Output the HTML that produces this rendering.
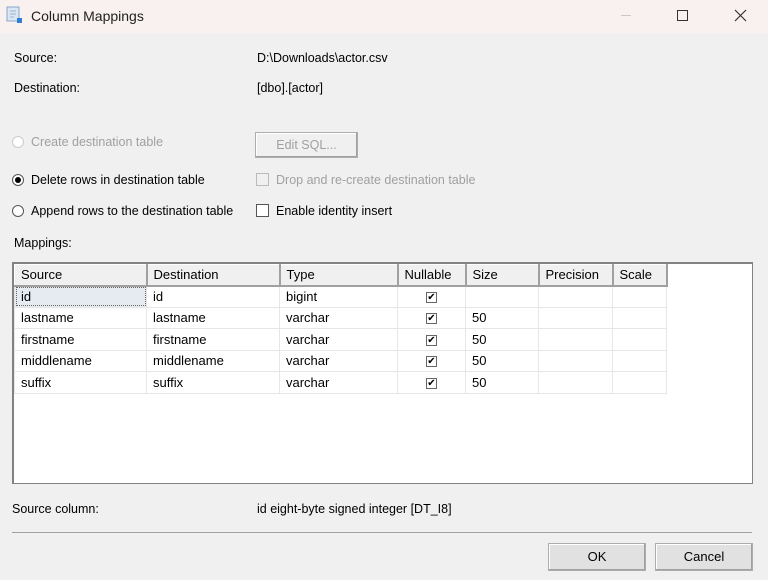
<!DOCTYPE html>
<html><head><style>
*{margin:0;padding:0;box-sizing:border-box}
body{width:768px;height:580px;background:#f0f0f0;font-family:"Liberation Sans",Arial,sans-serif;font-size:12.5px;color:#000;position:relative;overflow:hidden}
.a{position:absolute;white-space:nowrap}
.tb{position:absolute;left:0;top:0;width:768px;height:33px;background:#f8f1ef}
.dis{color:#a0a0a0}
.radio{position:absolute;width:12px;height:12px;border-radius:50%;border:1px solid #a8a8a8;background:#fff}
.cb{position:absolute;width:13px;height:13px;border:1px solid #555;background:#fff}
.btn{position:absolute;border:1px solid #adadad;background:#e1e1e1;text-align:center;box-shadow:inset -1px -1px 0 #a0a0a0,inset 1px 1px 0 #fff}
.grid{position:absolute;left:12px;top:262px;width:741px;height:222px;background:#fff;border:1px solid #828282;border-top:2px solid #828282;border-left:2px solid #828282}
table{border-collapse:collapse;position:absolute;left:0;top:0}
td,th{font-weight:normal;text-align:left;padding:0 0 0 6px;height:21.5px;font-size:13px;border:1px solid #e6e6e6}
th{background:#f0f0f0;border:1px solid #fff;border-right:2px solid #a0a0a0;border-bottom:2px solid #a0a0a0;height:21px}
.ck{display:inline-block;width:11px;height:11px;border:1px solid #666;font-size:10px;line-height:9px;text-align:center;vertical-align:middle}
</style></head><body>
<div class="tb"></div>
<svg class="a" style="left:6px;top:6px" width="18" height="18" viewBox="0 0 18 18"><rect x="1" y="1" width="12" height="14" fill="#dbe6f3" stroke="#8aa6c8"/><path d="M4 5h6M4 8h6M4 11h4" stroke="#9bb3d3"/><rect x="11" y="12" width="5" height="5" fill="#2f7fd6"/></svg>
<div class="a" style="left:31px;top:8px;font-size:14px;color:#222">Column Mappings</div>
<div class="a" style="left:621px;top:15px;width:10px;height:1px;background:#c8c8c8"></div>
<div class="a" style="left:677px;top:10px;width:11px;height:11px;border:1px solid #333"></div>
<svg class="a" style="left:734px;top:9px" width="13" height="13"><path d="M1 1L12 12M12 1L1 12" stroke="#333" stroke-width="1.2"/></svg>

<div class="a" style="left:14px;top:51px">Source:</div>
<div class="a" style="left:257px;top:51px">D:\Downloads\actor.csv</div>
<div class="a" style="left:14px;top:81px">Destination:</div>
<div class="a" style="left:257px;top:81px">[dbo].[actor]</div>

<div class="radio" style="left:12px;top:136px;border-color:#ccc"></div>
<div class="a dis" style="left:31px;top:135px">Create destination table</div>
<div class="btn" style="left:255px;top:132px;width:103px;height:26px;line-height:24px;color:#a0a0a0;background:#f0f0f0">Edit SQL...</div>
<div class="radio" style="left:12px;top:174px;border-color:#555"><div style="position:absolute;left:2px;top:2px;width:6px;height:6px;border-radius:50%;background:#000"></div></div>
<div class="a" style="left:31px;top:173px">Delete rows in destination table</div>
<div class="cb" style="left:256px;top:173px;border-color:#bbb;background:#f0f0f0"></div>
<div class="a dis" style="left:276px;top:173px">Drop and re-create destination table</div>
<div class="radio" style="left:12px;top:205px;border-color:#555"></div>
<div class="a" style="left:31px;top:204px">Append rows to the destination table</div>
<div class="cb" style="left:256px;top:204px"></div>
<div class="a" style="left:276px;top:204px">Enable identity insert</div>
<div class="a" style="left:14px;top:236px">Mappings:</div>

<div class="grid"><table>
<tr><th style="width:132px">Source</th><th style="width:133px">Destination</th><th style="width:118px">Type</th><th style="width:68px">Nullable</th><th style="width:73px">Size</th><th style="width:74px">Precision</th><th style="width:54px">Scale</th></tr>
<tr><td style="background:#e6ebf2;outline:1px dotted #666;outline-offset:-2px">id</td><td>id</td><td>bigint</td><td style="text-align:center;padding:0"><span class="ck">✔</span></td><td></td><td></td><td></td></tr>
<tr><td>lastname</td><td>lastname</td><td>varchar</td><td style="text-align:center;padding:0"><span class="ck">✔</span></td><td>50</td><td></td><td></td></tr>
<tr><td>firstname</td><td>firstname</td><td>varchar</td><td style="text-align:center;padding:0"><span class="ck">✔</span></td><td>50</td><td></td><td></td></tr>
<tr><td>middlename</td><td>middlename</td><td>varchar</td><td style="text-align:center;padding:0"><span class="ck">✔</span></td><td>50</td><td></td><td></td></tr>
<tr><td>suffix</td><td>suffix</td><td>varchar</td><td style="text-align:center;padding:0"><span class="ck">✔</span></td><td>50</td><td></td><td></td></tr>
</table></div>

<div class="a" style="left:12px;top:502px">Source column:</div>
<div class="a" style="left:257px;top:502px">id eight-byte signed integer [DT_I8]</div>
<div class="a" style="left:12px;top:532px;width:740px;height:1px;background:#a0a0a0"></div>
<div class="btn" style="left:548px;top:543px;width:98px;height:28px;line-height:26px;font-size:13px">OK</div>
<div class="btn" style="left:655px;top:543px;width:98px;height:28px;line-height:26px;font-size:13px">Cancel</div>
</body></html>
